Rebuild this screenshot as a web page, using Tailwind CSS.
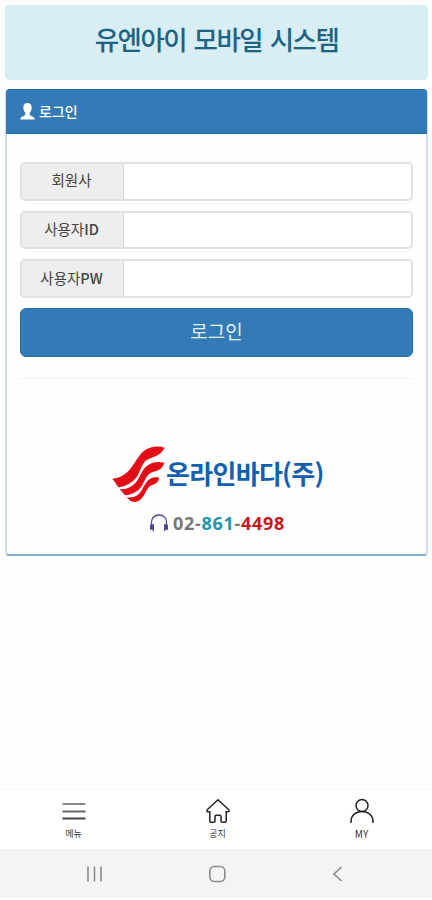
<!DOCTYPE html>
<html lang="ko">
<head>
    <meta charset="UTF-8">
    <meta name="viewport" content="width=device-width, initial-scale=1.0">
    <title>유엔아이 모바일 시스템</title>
    <script src="https://cdn.jsdelivr.net/npm/@tailwindcss/browser@4"></script>
</head>
<body class="bg-[#fefefe] font-['Noto_Sans_CJK_KR',sans-serif] text-[#444]">
<div class="flex h-[900px] w-[432px] flex-col overflow-hidden">

    <!-- 상단 제목 -->
    <header class="mr-[4px] ml-[5px] mt-[5px] flex h-[75px] shrink-0 justify-center rounded-[4px] border border-[#d2ecef] bg-[#d9edf5] pt-[14px]">
        <h1 class="text-[26.500px] leading-[38px] font-medium tracking-[-1.500px] [word-spacing:1.500px] whitespace-nowrap text-[#1c6484]">유엔아이 모바일 시스템</h1>
    </header>

    <!-- 로그인 패널 -->
    <main class="mr-[4px] ml-[5px] mt-[9px] flex h-[467px] shrink-0 flex-col rounded-[4px] border-x-2 border-b-2 border-x-[#cfdceb] border-b-[#82acd0]">
        <div class="-mx-[1px] flex h-[45px] items-center gap-[4px] rounded-t-[4px] border-y border-[#1c69a8] bg-[#337ab7] pl-[14px] text-white">
            <svg class="h-[17px] w-[15px]" viewBox="0 0 15 17" fill="currentColor">
                <path d="M7.500 0C4.500 0 3.200 1.800 3.300 4.600c0 2.200.8 4 2 5.200v1.300c0 1-.8 1.500-2.100 2.100C1.400 14 .3 14.400.3 16.500h14.400c0-2.100-1.100-2.500-2.900-3.300-1.300-.6-2.100-1.100-2.100-2.100V9.800c1.200-1.200 2-3 2-5.200C11.800 1.800 10.500 0 7.500 0z"/>
            </svg>
            <span class="pb-[2px] text-[14px] leading-5 font-medium">로그인</span>
        </div>

        <form class="flex flex-col px-[13px] pt-[28px]">
            <div class="flex flex-col gap-[10px]">
                <label class="flex h-[38.500px] overflow-hidden rounded-[5px] border-2 border-[#e0e0e0]">
                    <span class="flex w-[102px] items-center justify-center border-r border-[#d8d8d8] bg-[#eee] pr-[2px] pb-[2px] text-[14.500px]">회원사</span>
                    <input type="text" class="min-w-0 flex-1 bg-white px-3 outline-none">
                </label>
                <label class="flex h-[38.500px] overflow-hidden rounded-[5px] border-2 border-[#e0e0e0]">
                    <span class="flex w-[102px] items-center justify-center border-r border-[#d8d8d8] bg-[#eee] pr-[2px] pb-[1px] text-[14.500px]">사용자<b class="font-medium">ID</b></span>
                    <input type="text" class="min-w-0 flex-1 bg-white px-3 outline-none">
                </label>
                <label class="flex h-[38.500px] overflow-hidden rounded-[5px] border-2 border-[#e0e0e0]">
                    <span class="flex w-[102px] items-center justify-center border-r border-[#d8d8d8] bg-[#eee] pr-[2px] pb-[1px] text-[14.500px]">사용자<b class="font-medium">PW</b></span>
                    <input type="password" class="min-w-0 flex-1 bg-white px-3 outline-none">
                </label>
            </div>
            <button type="button" class="mt-[10px] h-[49px] rounded-[6px] border border-[#1e6dab] bg-[#337ab7] pb-[2px] text-[19px] text-[#e4effa]">로그인</button>
            <hr class="mt-[21px] border-[#f2f2f2]">
        </form>

        <!-- 회사 로고 -->
        <div class="mt-[67px] flex h-[56px] items-center pl-[105px]">
            <svg class="h-[56px] w-[53px]" viewBox="12 14 158 168" fill="#e30d17">
                <path d="M169 19C148 12 122 16 106 30C88 46 79 70 60 90C47 103 30 112 12 112C20 120 24 129 31 138C56 134 76 122 88 103C98 86 101 68 114 57C130 46 155 48 169 19Z"/>
                <path d="M169 64C149 59 129 62 115 75C99 89 96 109 82 124C69 138 52 145 34 144C41 150 45 156 51 162C73 160 91 151 102 132C111 115 115 103 127 95C141 87 160 90 169 64Z"/>
                <path d="M153 109C138 105 125 110 116 121C106 133 102 149 91 159C81 168 68 170 55 168C62 174 67 182 78 182C96 182 104 168 111 155C118 143 121 136 129 132C139 128 150 126 153 109Z"/>
            </svg>
            <span class="ml-[1px] pb-[2px] text-[26px] leading-[38px] font-bold tracking-[-0.700px] whitespace-nowrap text-[#145fb0]">온라인바다(주)</span>
        </div>
        <div class="mt-[9px] flex h-[24px] items-center pl-[142px]">
            <svg class="h-[18px] w-[20px]" viewBox="0 0 20 18" fill="none" stroke="#4b4692">
                <path stroke-width="1.300" d="M2.500 12V8.500C2.500 4 5.500 1 10 1s7.500 3 7.500 7.500V12"/>
                <path stroke-width="3" d="M2.500 10.800v5M17.500 10.800v5"/>
                <path stroke-width="1.300" d="M4.300 10v7M15.700 10v7"/>
            </svg>
            <span class="ml-[4px] font-['Noto_Sans',sans-serif] text-[18px] leading-6 font-bold tracking-[0.700px] whitespace-nowrap text-[#777]">02-<span class="text-[#2495ad]">861</span>-<span class="text-[#c8161d]">4498</span></span>
        </div>
    </main>

    <!-- 하단 메뉴 -->
    <nav class="mt-auto grid h-[60px] shrink-0 grid-cols-3 border-t border-[#f8f8f8] bg-white pt-[8px] text-[9px] leading-[12px] text-[#333]">
        <a class="flex flex-col items-center gap-[4px] pl-[3px]">
            <svg class="h-[26px] w-[26px]" viewBox="0 0 26 26" fill="none" stroke-width="2">
                <path stroke="#888" d="M1.500 6h23"/>
                <path stroke="#666" d="M1.500 13.500h23"/>
                <path stroke="#444" d="M1.500 20.500h23"/>
            </svg>
            <span>메뉴</span>
        </a>
        <a class="flex flex-col items-center gap-[4px] pl-[3px]">
            <svg class="h-[26px] w-[26px]" viewBox="0 0 26 26" fill="none" stroke="#222" stroke-width="1.500" stroke-linejoin="round">
                <path d="M13 1.800L2.200 11.800c-.7.700-.4 2 .6 2h2v9.200c0 .8.500 1.300 1.300 1.300h2.600c.8 0 1.300-.5 1.300-1.300v-4.500c0-.8.500-1.300 1.300-1.300h3.400c.8 0 1.300.5 1.300 1.300v4.500c0 .8.500 1.300 1.300 1.300h2.600c.8 0 1.300-.5 1.300-1.300v-9.200h2c1 0 1.300-1.300.6-2z"/>
            </svg>
            <span>공지</span>
        </a>
        <a class="flex flex-col items-center gap-[4px] pl-[3px]">
            <svg class="h-[26px] w-[26px]" viewBox="0 0 26 26" fill="none" stroke="#222" stroke-width="1.500">
                <circle cx="13" cy="7.500" r="6"/>
                <path d="M2 25v-1.500c0-6 4.500-10 11-10s11 4 11 10V25"/>
            </svg>
            <span class="text-[10px]">MY</span>
        </a>
    </nav>

    <!-- 시스템 내비게이션 -->
    <div class="mb-[2px] flex h-[49px] shrink-0 items-center justify-between bg-[#f4f4f4] pr-[89px] pl-[86px]">
        <svg class="h-[18px] w-[18px]" viewBox="0 0 18 18" fill="none" stroke="#8c8c8c" stroke-width="1.600">
            <path d="M2 1.500v15M8.500 1.500v15M15 1.500v15"/>
        </svg>
        <svg class="h-[18px] w-[18px]" viewBox="0 0 18 18" fill="none" stroke="#8c8c8c" stroke-width="1.600">
            <rect x="0.800" y="1.500" width="15" height="15" rx="4.500"/>
        </svg>
        <svg class="h-[18px] w-[12px]" viewBox="0 0 12 18" fill="none" stroke="#8c8c8c" stroke-width="1.600">
            <path d="M10.500 2L3 9l7.500 7"/>
        </svg>
    </div>
</div>
</body>
</html>
